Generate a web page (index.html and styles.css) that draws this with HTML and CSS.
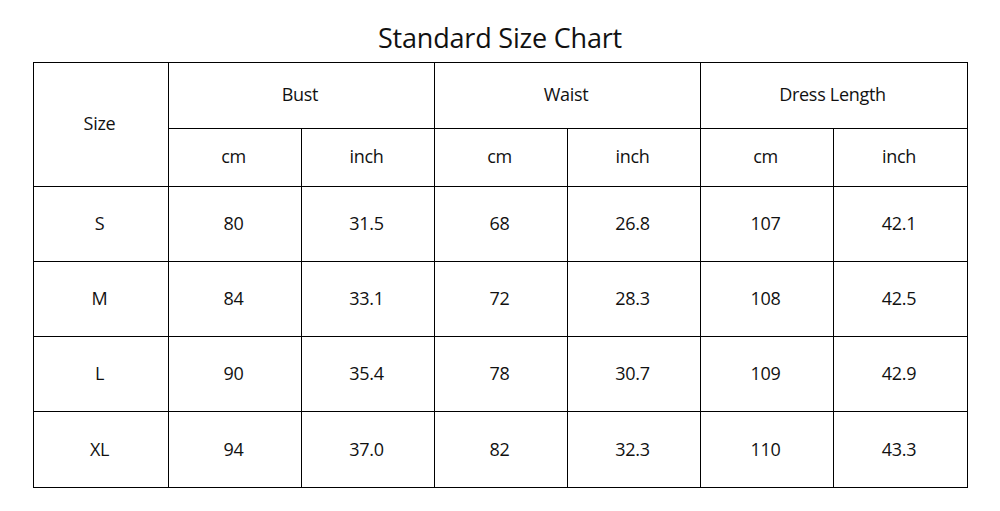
FILE: index.html
```html
<!DOCTYPE html>
<html>
<head>
<meta charset="utf-8">
<link rel="stylesheet" href="styles.css">
</head>
<body>
<h1 class="title">Standard Size Chart</h1>
<table class="chart">
  <colgroup>
    <col class="c-size">
    <col class="c-val"><col class="c-val"><col class="c-val">
    <col class="c-val"><col class="c-val"><col class="c-last">
  </colgroup>
  <thead>
    <tr class="h1">
      <th rowspan="2">Size</th>
      <th colspan="2">Bust</th>
      <th colspan="2">Waist</th>
      <th colspan="2">Dress Length</th>
    </tr>
    <tr class="h2">
      <th>cm</th><th>inch</th><th>cm</th><th>inch</th><th>cm</th><th>inch</th>
    </tr>
  </thead>
  <tbody>
    <tr><td>S</td><td>80</td><td>31.5</td><td>68</td><td>26.8</td><td>107</td><td>42.1</td></tr>
    <tr><td>M</td><td>84</td><td>33.1</td><td>72</td><td>28.3</td><td>108</td><td>42.5</td></tr>
    <tr><td>L</td><td>90</td><td>35.4</td><td>78</td><td>30.7</td><td>109</td><td>42.9</td></tr>
    <tr class="last"><td>XL</td><td>94</td><td>37.0</td><td>82</td><td>32.3</td><td>110</td><td>43.3</td></tr>
  </tbody>
</table>
</body>
</html>
```
FILE: styles.css
```css
html, body {
  margin: 0;
  padding: 0;
  background: #ffffff;
}
body {
  font-family: "Open Sans", "Noto Sans", "Liberation Sans", sans-serif;
  color: #111111;
}
.title {
  margin: 0;
  height: 62px;
  box-sizing: border-box;
  padding-top: 19px;
  font-size: 27px;
  font-weight: 400;
  line-height: 38px;
  text-align: center;
  letter-spacing: -0.2px;
}
.chart {
  margin-left: 33px;
  border-collapse: collapse;
  table-layout: fixed;
  width: 934px;
  font-size: 18px;
  letter-spacing: -0.3px;
}
.c-size { width: 135px; }
.c-val { width: 133px; }
.c-last { width: 134px; }
.chart th, .chart td {
  border: 1px solid #000000;
  padding: 0 3px 2px 0;
  text-align: center;
  vertical-align: middle;
  font-weight: 400;
  line-height: 24px;
}
.chart thead th {
  padding-bottom: 4px;
}
.h1 th { height: 61px; }
.h2 th { height: 53px; }
.chart tbody td { height: 72px; }
.chart tbody tr.last td { height: 73px; }
```
